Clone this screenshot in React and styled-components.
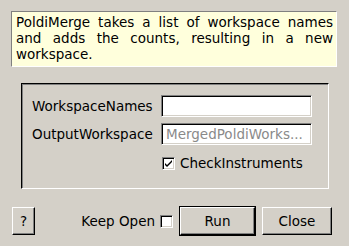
import React from 'react';
import styled, { createGlobalStyle, css } from 'styled-components';

const Global = createGlobalStyle`
    html, body { margin: 0; padding: 0; background: #d4d0c8; }
    body {
        font-family: "DejaVu Sans", sans-serif;
        font-size: 13.5px;
        color: #000;
    }
`;

const sunken = css`
    border-style: solid;
    border-width: 1px;
    border-color: #808080 #ffffff #ffffff #808080;
    box-shadow: inset 1px 1px 0 #000, inset -1px -1px 0 #d4d0c8;
`;

const raised = css`
    border-style: solid;
    border-width: 1px;
    border-color: #ffffff #000 #000 #ffffff;
    box-shadow: inset -1px -1px 0 #808080;
`;

const Dialog = styled.div`
    width: 349px;
    height: 246px;
    box-sizing: border-box;
    padding: 11px 12px 0 11px;
    display: flex;
    flex-direction: column;
`;

const Help = styled.div`
    height: 56px;
    box-sizing: border-box;
    background: #ffffdc;
    border-style: solid;
    border-width: 1px;
    border-color: #808080 #ffffff #ffffff #808080;
    padding: 2px 3px 0 4px;
    line-height: 16px;
    text-align: justify;
`;

const Group = styled.div`
    margin: 16px 8px 0 10px;
    height: 106px;
    box-sizing: border-box;
    border-style: solid;
    border-width: 1px;
    border-color: #000 #ffffff #ffffff #000;
    box-shadow: inset 1px 1px 0 #808080;
    padding: 11px 0 0 10px;
    display: grid;
    grid-template-columns: 123px 151px;
    column-gap: 6px;
    row-gap: 6px;
    align-items: center;
    align-content: start;
`;

const Label = styled.span`
    white-space: nowrap;
`;

const Field = styled.div`
    ${sunken};
    height: 22px;
    box-sizing: border-box;
    background: #fff;
    padding: 0 4px;
    display: flex;
    align-items: center;
    color: ${p => (p.$placeholder ? '#8a8a8a' : '#000')};
    white-space: nowrap;
    overflow: hidden;
`;

const CheckRow = styled.label`
    grid-column: 2;
    display: flex;
    align-items: center;
    gap: 5px;
    margin-top: 4px;
    margin-left: 1px;
    white-space: nowrap;
`;

const Box = styled.span`
    ${sunken};
    width: 13px;
    height: 13px;
    box-sizing: border-box;
    background: #fff;
    display: inline-flex;
    align-items: center;
    justify-content: center;
    flex: none;
`;

const Footer = styled.div`
    margin-top: 18px;
    display: flex;
    align-items: center;
    padding: 0 5px 0 1px;
`;

const Button = styled.button`
    ${raised};
    background: #d4d0c8;
    font: inherit;
    color: #000;
    height: 28px;
    width: ${p => p.$w}px;
    padding: 0;
    margin-left: ${p => p.$gap || 0}px;
    ${p => p.$default && css`
        outline: 1px solid #000;
        outline-offset: 0;
    `}
`;

const KeepOpen = styled.label`
    margin-left: auto;
    display: flex;
    align-items: center;
    gap: 5px;
    white-space: nowrap;
`;

const Check = () => (
    <svg width="9" height="9" viewBox="0 0 9 9">
        <path d="M1 4 L3 6 L8 1 L8 3 L3 8 L1 6 Z" fill="#000" />
    </svg>
);

export default function App() {
    return (
        <>
            <Global />
            <Dialog>
                <Help>
                    PoldiMerge takes a list of workspace names and adds the counts, resulting in a new workspace.
                </Help>
                <Group>
                    <Label>WorkspaceNames</Label>
                    <Field />
                    <Label>OutputWorkspace</Label>
                    <Field $placeholder>MergedPoldiWorks...</Field>
                    <CheckRow>
                        <Box><Check /></Box>
                        CheckInstruments
                    </CheckRow>
                </Group>
                <Footer>
                    <Button $w={23}>?</Button>
                    <KeepOpen>
                        Keep Open
                        <Box />
                    </KeepOpen>
                    <Button $w={75} $gap={7} $default>Run</Button>
                    <Button $w={70} $gap={7}>Close</Button>
                </Footer>
            </Dialog>
        </>
    );
}
